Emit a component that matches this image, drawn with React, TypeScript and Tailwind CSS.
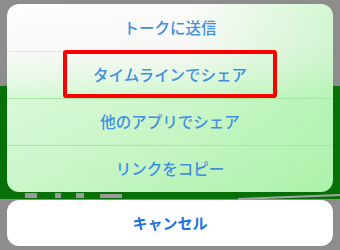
import type { ReactNode } from 'react';

const jp = { fontFamily: '"Noto Sans CJK JP", "Noto Sans", sans-serif' };

function Row({ children, line }: { children: ReactNode; line?: string }) {
  return (
    <div
      className={`flex h-[47px] items-center justify-center border-t text-[15.5px] font-medium text-[#4190e0] ${line ?? 'border-transparent'}`}
    >
      {children}
    </div>
  );
}

// blurred app screen behind the sheet: green LINE banner
function Backdrop() {
  return (
    <svg className="absolute inset-0" width="340" height="250" viewBox="0 0 340 250">
      <rect width="340" height="250" fill="#8d8d8d" />
      <rect y="86" width="340" height="113" fill="#077107" />
      <g fill="#9a9a9a">
        <rect x="25" y="193" width="12" height="5" />
        <rect x="55" y="193" width="6" height="5" />
        <rect x="76" y="193" width="8" height="5" />
        <rect x="100" y="194" width="22" height="4" />
      </g>
      <path d="M238 199 L340 195" stroke="#a5a5a5" strokeWidth="2" />
    </svg>
  );
}

export default function App() {
  return (
    <div className="relative h-[250px] w-[340px] overflow-hidden" style={jp}>
      <Backdrop />

      <div className="relative flex flex-col gap-[8px] px-[7px] pt-[4px]">
        <div className="flex flex-col overflow-hidden rounded-[12px] bg-[linear-gradient(90deg,rgba(255,255,255,0.25),rgba(255,255,255,0)_55%,rgba(150,240,150,0.4)),linear-gradient(180deg,#fcfcfb_0%,#f7f8f5_24%,#e4f8e2_38%,#ccf6ca_50%,#c4f5c2_75%,#baf3b8_100%)]">
          <Row>トークに送信</Row>
          <Row line="border-[#e3e6e1]">タイムラインでシェア</Row>
          <Row line="border-[#a6e8a4]">他のアプリでシェア</Row>
          <Row line="border-[#a6e8a4]">リンクをコピー</Row>
        </div>
        <div className="flex h-[46px] items-center justify-center rounded-[12px] bg-white text-[15px] font-bold text-[#1b72e2]">
          キャンセル
        </div>

        {/* highlight annotation */}
        <div className="absolute left-[63px] top-[50px] h-[48px] w-[214px] rounded-[3px] border-[4px] border-[#fb0000]" />
      </div>
    </div>
  );
}
